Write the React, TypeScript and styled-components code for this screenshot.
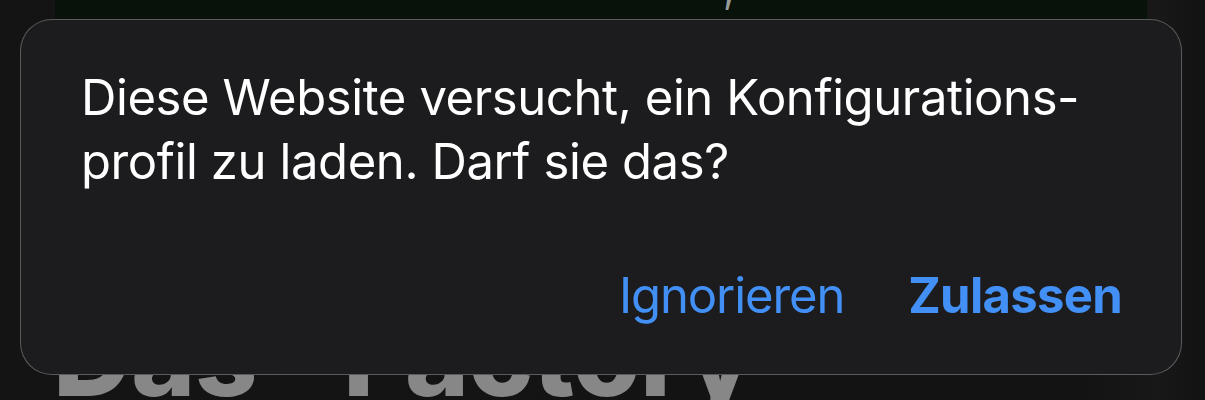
import React from "react";
import styled, { createGlobalStyle } from "styled-components";

const Global = createGlobalStyle`
  html, body { margin: 0; padding: 0; background: #131313; }
  body { font-family: Inter, "Noto Sans", sans-serif; overflow: hidden; }
`;

const Page = styled.div`
  position: relative;
  width: 1205px;
  height: 400px;
  overflow: hidden;
  background: linear-gradient(90deg, #141414 0%, #131313 90%, #181818 96%, #121212 100%);
`;

const Banner = styled.div`
  position: relative;
  margin: 0 58px 0 55px;
  height: 19px;
  background: #08120a;
`;

const BannerGlyph = styled.span`
  position: absolute;
  left: 668px;
  top: -36px;
  font-size: 40px;
  color: #9a9a9a;
`;

const Heading = styled.h1`
  margin: 0;
  padding: 287px 0 0 53px;
  font-family: Inter, sans-serif;
  font-weight: 800;
  font-size: 109px;
  line-height: 100px;
  letter-spacing: -0.5px;
  color: #878787;
  white-space: nowrap;
`;

const Alert = styled.div`
  position: absolute;
  top: 19px;
  left: 20px;
  width: 1162px;
  height: 356px;
  box-sizing: border-box;
  border-radius: 32px;
  border: 1px solid rgba(255, 255, 255, 0.28);
  background: #1c1c1e;
  padding: 46px 59px 46px 60px;
  display: flex;
  flex-direction: column;
  justify-content: space-between;
`;

const Message = styled.p`
  margin: 0;
  font-size: 49px;
  line-height: 64px;
  color: #ffffff;
  letter-spacing: -0.4px;
`;

const Actions = styled.div`
  display: flex;
  justify-content: flex-end;
  gap: 64px;
`;

const ActionButton = styled.button<{ $primary?: boolean }>`
  appearance: none;
  border: 0;
  padding: 0;
  background: none;
  font-family: Inter, sans-serif;
  font-size: 49px;
  line-height: 64px;
  font-weight: ${(p) => (p.$primary ? 700 : 400)};
  color: #4290f6;
  letter-spacing: ${(p) => (p.$primary ? "-0.7px" : "-1.1px")};
  cursor: pointer;
`;

export default function App() {
  return (
    <Page>
      <Global />
      <Banner>
        <BannerGlyph>,</BannerGlyph>
      </Banner>
      <Heading>Das “Factory”</Heading>
      <Alert>
        <Message>
          Diese Website versucht, ein Konfigurations-
          <br />
          profil zu laden. Darf sie das?
        </Message>
        <Actions>
          <ActionButton>Ignorieren</ActionButton>
          <ActionButton $primary>Zulassen</ActionButton>
        </Actions>
      </Alert>
    </Page>
  );
}
